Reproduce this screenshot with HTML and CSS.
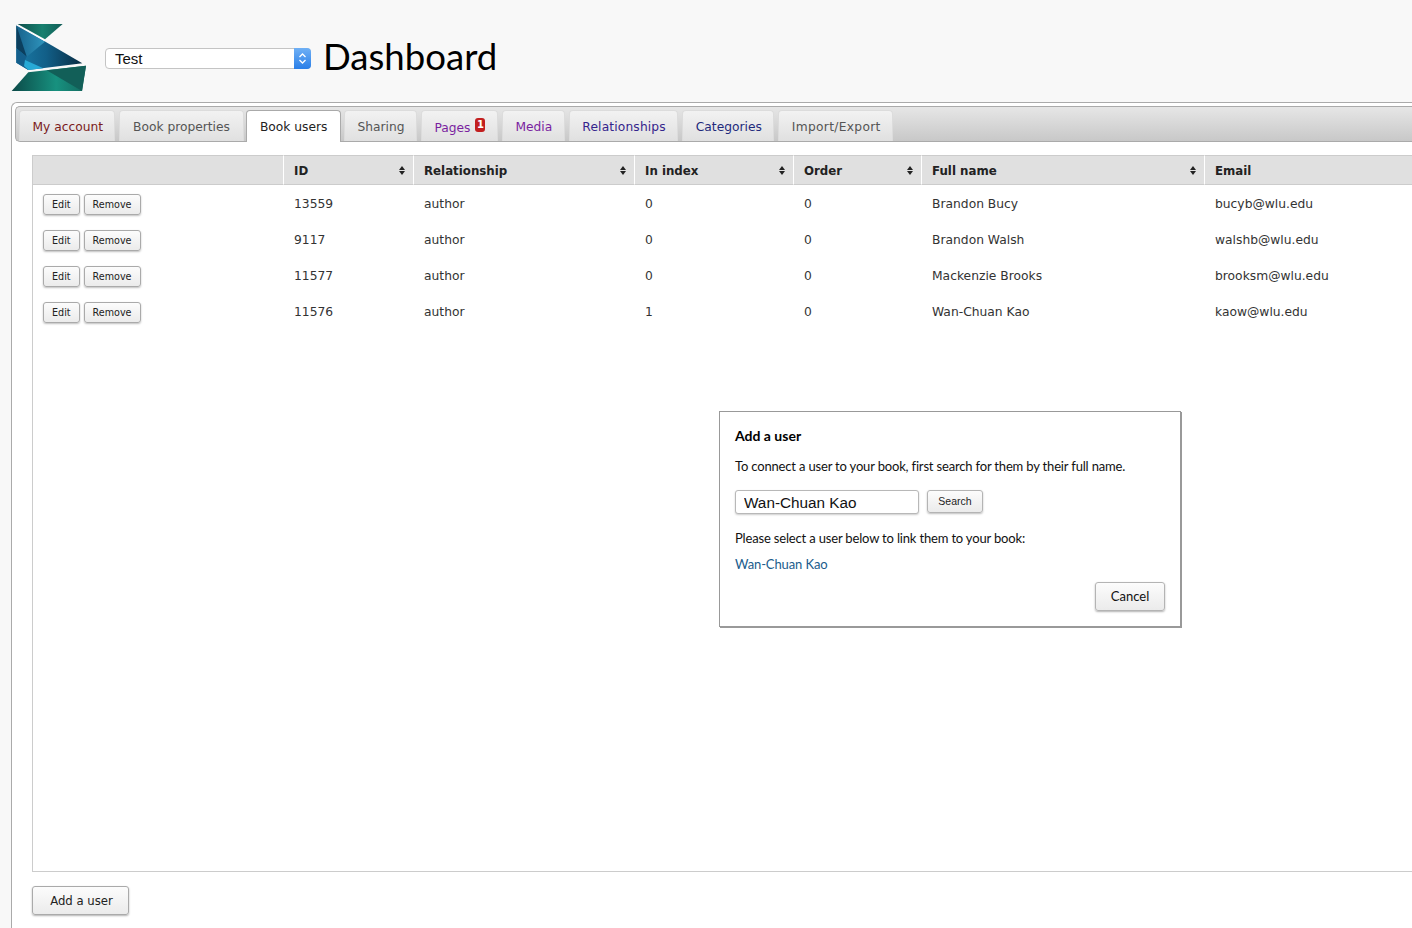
FILE: index.html
```html
<!DOCTYPE html>
<html lang="en">
<head>
<meta charset="utf-8">
<title>Dashboard</title>
<link rel="stylesheet" href="styles.css">
</head>
<body>
<header class="top">
  <svg class="logo" width="76" height="68" viewBox="0 0 76 68" aria-label="Logo">
    <defs>
      <linearGradient id="gTop" x1="0" y1="0" x2="1" y2="0"><stop offset="0" stop-color="#0f4f4c"/><stop offset="0.55" stop-color="#17806f"/><stop offset="1" stop-color="#125e57"/></linearGradient>
      <linearGradient id="gLight" x1="0" y1="0" x2="1" y2="0"><stop offset="0" stop-color="#17628c"/><stop offset="1" stop-color="#2f95bd"/></linearGradient>
      <linearGradient id="gMid" x1="0" y1="0" x2="1" y2="0"><stop offset="0" stop-color="#1a7aa6"/><stop offset="0.45" stop-color="#125f88"/><stop offset="1" stop-color="#082c42"/></linearGradient>
      <linearGradient id="gBot" x1="0" y1="0" x2="1" y2="0"><stop offset="0" stop-color="#0c4a48"/><stop offset="0.6" stop-color="#17917f"/><stop offset="1" stop-color="#146a60"/></linearGradient>
    </defs>
    <polygon points="6.5,0 51.7,0 34,15.3" fill="url(#gTop)"/>
    <polygon points="5.3,0.7 71.3,39.3 17.3,46 5.3,38.7" fill="url(#gMid)"/>
    <polygon points="5.3,0.7 34,17.7 15.7,32.7" fill="url(#gLight)"/>
    <polygon points="5.3,0.7 15.7,32.7 5.3,24.3" fill="#0c3f5e"/>
    <polygon points="5.3,24.3 15.7,32.7 14,36 17.3,46 5.3,38.7" fill="#145f8c"/>
    <polygon points="14,36 32.3,44.3 17.3,46 13,42" fill="#27aad6"/>
    <polyline points="5.3,0.7 34,16.7" fill="none" stroke="#fff" stroke-width="1.2"/>
    <polygon points="75,41.7 71,67 0.7,67 17.3,48.3" fill="url(#gBot)"/>
    <polygon points="35.7,46.2 75,41.7 71,67" fill="#125f58"/>
  </svg>
  <div class="book-select">
    <span class="book-select-value">Test</span>
    <span class="book-select-arrows">
      <svg width="9" height="13" viewBox="0 0 9 13"><path d="M1.5 5 4.5 2 7.5 5M1.5 8 4.5 11 7.5 8" fill="none" stroke="#fff" stroke-width="1.3"/></svg>
    </span>
  </div>
  <h1 class="title">Dashboard</h1>
</header>

<main class="panel">
  <nav class="tabs">
    <a class="tab tab-account">My account</a>
    <a class="tab tab-props">Book properties</a>
    <a class="tab tab-active">Book users</a>
    <a class="tab">Sharing</a>
    <a class="tab tab-pages"><span class="pages-label">Pages</span><span class="badge">1</span></a>
    <a class="tab tab-media">Media</a>
    <a class="tab tab-rel">Relationships</a>
    <a class="tab tab-cat">Categories</a>
    <a class="tab tab-import">Import/Export</a>
  </nav>

  <section class="content">
    <div class="table-box">
      <table class="users">
        <colgroup>
          <col class="c-actions"><col class="c-id"><col class="c-rel"><col class="c-index"><col class="c-order"><col class="c-name"><col class="c-email">
        </colgroup>
        <thead>
          <tr>
            <th></th>
            <th>ID<span class="sort"></span></th>
            <th>Relationship<span class="sort"></span></th>
            <th>In index<span class="sort"></span></th>
            <th>Order<span class="sort"></span></th>
            <th>Full name<span class="sort"></span></th>
            <th>Email</th>
          </tr>
        </thead>
        <tbody>
          <tr>
            <td class="actions"><button class="btn-small">Edit</button><button class="btn-small">Remove</button></td>
            <td>13559</td><td>author</td><td>0</td><td>0</td><td>Brandon Bucy</td><td>bucyb@wlu.edu</td>
          </tr>
          <tr>
            <td class="actions"><button class="btn-small">Edit</button><button class="btn-small">Remove</button></td>
            <td>9117</td><td>author</td><td>0</td><td>0</td><td>Brandon Walsh</td><td>walshb@wlu.edu</td>
          </tr>
          <tr>
            <td class="actions"><button class="btn-small">Edit</button><button class="btn-small">Remove</button></td>
            <td>11577</td><td>author</td><td>0</td><td>0</td><td>Mackenzie Brooks</td><td>brooksm@wlu.edu</td>
          </tr>
          <tr>
            <td class="actions"><button class="btn-small">Edit</button><button class="btn-small">Remove</button></td>
            <td>11576</td><td>author</td><td>1</td><td>0</td><td>Wan-Chuan Kao</td><td>kaow@wlu.edu</td>
          </tr>
        </tbody>
      </table>
    </div>
    <button class="btn-add">Add a user</button>
  </section>
</main>

<aside class="dialog">
  <h2 class="dialog-title">Add a user</h2>
  <p class="dialog-text">To connect a user to your book, first search for them by their full name.</p>
  <div class="search-row">
    <input class="search-input" type="text" value="Wan-Chuan Kao">
    <button class="btn-search">Search</button>
  </div>
  <p class="dialog-text dialog-select">Please select a user below to link them to your book:</p>
  <a class="dialog-link">Wan-Chuan Kao</a>
  <div class="dialog-foot"><button class="btn-cancel">Cancel</button></div>
</aside>
</body>
</html>
```

FILE: styles.css
```css
* { box-sizing: border-box; }
html, body { margin: 0; height: 928px; overflow: hidden; }
body {
  background: #f8f8f8;
  font-family: "DejaVu Sans", sans-serif;
  color: #333;
  width: 1412px;
  position: relative;
}
.top {
  display: flex;
  align-items: flex-start;
  height: 102px;
  padding: 24px 0 0 11px;
}
.logo { display: block; flex: none; }
.book-select {
  display: flex;
  width: 206px;
  height: 21px;
  margin: 24px 0 0 18px;
  background: #fff;
  border: 1px solid #c4c4c4;
  border-radius: 4px;
  font-family: "Liberation Sans", sans-serif;
  font-size: 15px;
  color: #111;
}
.book-select-value { flex: 1; padding-left: 9px; line-height: 20px; }
.book-select-arrows {
  display: flex;
  align-items: center;
  justify-content: center;
  width: 17px;
  margin: -1px -1px -1px 0;
  border-radius: 0 4px 4px 0;
  background: linear-gradient(#6fb0f5, #2a7fe8);
}
.title {
  margin: 9px 0 0 12px;
  font-family: Lato, sans-serif;
  font-weight: 400;
  font-size: 36.6px;
  line-height: 46px;
  color: #000;
}
.panel {
  margin-left: 11px;
  width: 1401px;
  height: 826px;
  background: #fff;
  border: 1px solid #aaa;
  border-right: 0;
  border-bottom: 0;
  border-radius: 6px 0 0 0;
  padding: 3px 0 0 3px;
}
.tabs {
  display: flex;
  gap: 4px;
  height: 36px;
  padding: 3px 0 0 3px;
  background: linear-gradient(#e6e6e6, #c8c8c8);
  border: 1px solid #aaa;
  border-right: 0;
  border-radius: 5px 0 0 5px;
}
.tab {
  display: block;
  height: 31px;
  padding: 0 11.5px 0 12.5px;
  font-size: 12.25px;
  line-height: 32px;
  white-space: nowrap;
  color: #555;
  background: linear-gradient(#f2f2f2, #e0e0e0);
  border: 1px solid #dcdcdc;
  border-bottom: 0;
  border-radius: 4px 4px 0 0;
}
.tab-account { color: #7b1c1c; padding-right: 10.5px; }
.tab-props { padding: 0 13.5px; }
.tab-active {
  height: 32px;
  margin: 0 -1px 0 -2px;
  padding: 0 12.5px;
  color: #222;
  background: #fff;
  border: 1px solid #aaa;
  border-bottom: 0;
}
.tab-pages, .tab-media { color: #7a1fa0; }
.pages-label { position: relative; top: 1px; }
.tab-rel { color: #35248c; letter-spacing: .15px; }
.tab-cat { color: #1f2a7c; }
.tab-import { letter-spacing: .3px; }
.badge {
  display: inline-block;
  width: 10px;
  height: 14px;
  margin-left: 5px;
  vertical-align: 3px;
  background: #c21f1f;
  border-radius: 3px;
  color: #fff;
  font-size: 10px;
  font-weight: 700;
  line-height: 13px;
  text-align: center;
}
.content { padding: 13px 0 0 17px; }
.table-box {
  height: 717px;
  border-left: 1px solid #ccc;
  border-bottom: 1px solid #ccc;
}
.users {
  width: 1379px;
  table-layout: fixed;
  border-collapse: separate;
  border-spacing: 0;
  font-size: 12.3px;
}
.c-actions { width: 251px; }
.c-id { width: 130px; }
.c-rel { width: 221px; }
.c-index { width: 159px; }
.c-order { width: 128px; }
.c-name { width: 283px; }
.users th {
  position: relative;
  height: 30px;
  padding: 2px 10px 0;
  text-align: left;
  font-weight: 700;
  font-size: 11.8px;
  color: #222;
  background: #e0e0e0;
  border-top: 1px solid #ccc;
  border-bottom: 1px solid #ccc;
  border-right: 1px solid #fff;
}
.users th:last-child { border-right: 0; }
.sort {
  position: absolute;
  right: 7px;
  top: 10px;
  width: 7px;
  height: 9px;
}
.sort::before, .sort::after {
  content: "";
  position: absolute;
  left: 0;
  border-left: 3.5px solid transparent;
  border-right: 3.5px solid transparent;
}
.sort::before { top: 0; border-bottom: 4px solid #222; }
.sort::after { bottom: 0; border-top: 4px solid #222; }
.users td {
  height: 36px;
  padding: 1px 10px 0;
  vertical-align: middle;
  color: #333;
  white-space: nowrap;
}
.users td.actions { padding: 2px 0 0 10px; }
.btn-small {
  height: 21px;
  margin-right: 4px;
  padding: 0 8px;
  font-family: "DejaVu Sans", sans-serif;
  font-size: 9.6px;
  color: #222;
  background: linear-gradient(#fcfcfc, #ebebeb);
  border: 1px solid #aaa;
  border-radius: 3px;
  box-shadow: 0 1px 2px rgba(0, 0, 0, .25);
}
.btn-add {
  display: block;
  width: 97px;
  height: 29px;
  margin-top: 14px;
  padding: 0 0 0 2px;
  font-family: "DejaVu Sans", sans-serif;
  font-size: 11.7px;
  color: #222;
  background: linear-gradient(#fcfcfc, #ebebeb);
  border: 1px solid #aaa;
  border-radius: 3px;
  box-shadow: 0 1px 2px rgba(0, 0, 0, .3);
}
.dialog {
  position: absolute;
  left: 719px;
  top: 411px;
  width: 462px;
  height: 216px;
  padding: 15px 15px 0 15px;
  background: #fff;
  border: 1px solid #999;
  box-shadow: 1px 1px 0 #999;
  font-family: Lato, sans-serif;
  font-size: 13px;
  color: #111;
}
.dialog-title {
  margin: 0;
  font-size: 14px;
  line-height: 18px;
  font-weight: 700;
  color: #000;
}
.dialog-text { margin: 13px 0 0; line-height: 17px; letter-spacing: -.17px; }
.search-row { display: flex; gap: 8px; margin-top: 15px; }
.search-input {
  width: 184px;
  height: 24px;
  padding: 1px 8px 0;
  font-family: "Liberation Sans", sans-serif;
  font-size: 15.3px;
  color: #111;
  background: #fff;
  border: 1px solid #b8b8b8;
  border-radius: 3px;
  box-shadow: 0 1px 2px rgba(0, 0, 0, .2);
  outline: none;
}
.btn-search {
  width: 56px;
  height: 23px;
  padding: 0 0 2px;
  font-family: "Liberation Sans", sans-serif;
  font-size: 10.5px;
  color: #222;
  background: linear-gradient(#fcfcfc, #ebebeb);
  border: 1px solid #b4b4b4;
  border-radius: 3px;
  box-shadow: 0 1px 2px rgba(0, 0, 0, .25);
}
.dialog-select { margin-top: 16px; }
.dialog-link { display: block; margin-top: 9px; line-height: 17px; color: #1a5c8c; letter-spacing: -.1px; }
.dialog-foot { display: flex; justify-content: flex-end; margin-top: 9px; }
.btn-cancel {
  width: 70px;
  height: 29px;
  padding: 0 0 1px;
  font-family: Lato, sans-serif;
  font-size: 13px;
  color: #111;
  background: linear-gradient(#fcfcfc, #ebebeb);
  border: 1px solid #b4b4b4;
  border-radius: 3px;
  box-shadow: 0 1px 2px rgba(0, 0, 0, .3);
}
```
